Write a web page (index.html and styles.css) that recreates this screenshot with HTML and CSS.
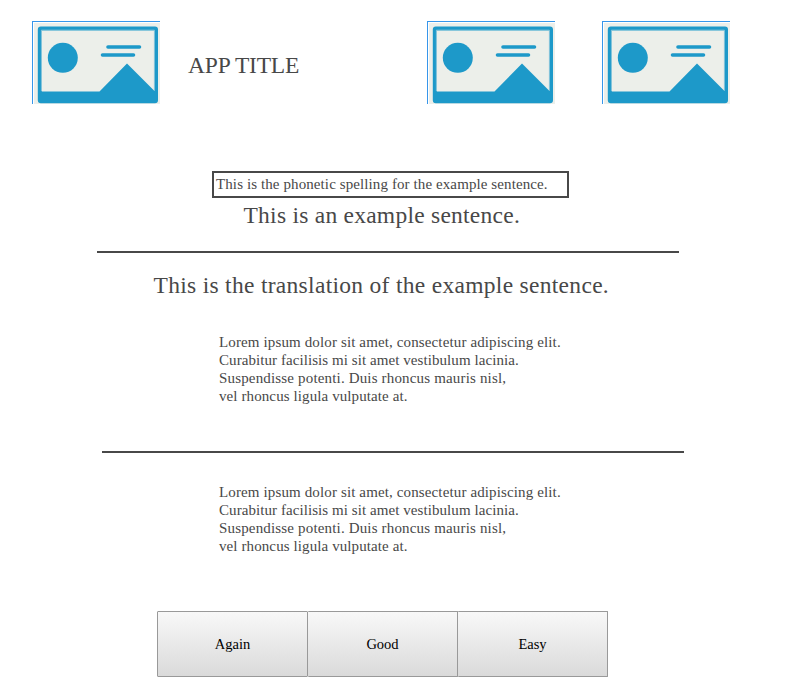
FILE: index.html
```html
<!DOCTYPE html>
<html lang="en">
<head>
<meta charset="utf-8">
<title>App Title</title>
<link rel="stylesheet" href="styles.css">
</head>
<body>
<svg class="defs" aria-hidden="true">
  <symbol id="picture" viewBox="0 0 128 83">
    <path d="M2 2H128V83H2Z" fill="#ecefea"/>
    <path d="M0 0H128V1H1V83H0Z" fill="#3796ea"/>
    <g class="soft">
      <rect x="7.8" y="7.6" width="116.2" height="72.6" rx="1" fill="none" stroke="#1d99c9" stroke-width="4"/>
      <path d="M9.4 70V9.2H122.4V70" fill="none" stroke="#8cc8dc" stroke-width="1"/>
      <path d="M7 70.5H67.5L95 42.5L122.5 70H125V81H7Z" fill="#1d99c9"/>
      <circle cx="30.8" cy="36.8" r="15" fill="#1d99c9"/>
      <path d="M76 26H107.5M70.5 34H101.5" stroke="#1d99c9" stroke-width="3.6" stroke-linecap="round"/>
    </g>
  </symbol>
</svg>
<header class="header">
  <svg class="picture"><use href="#picture"/></svg>
  <h1 class="title">APP TITLE</h1>
  <svg class="picture"><use href="#picture"/></svg>
  <svg class="picture picture-last"><use href="#picture"/></svg>
</header>
<main>
  <div class="phonetic">This is the phonetic spelling for the example sentence.</div>
  <p class="sentence">This is an example sentence.</p>
  <hr class="rule">
  <p class="translation">This is the translation of the example sentence.</p>
  <p class="notes">
    <span class="l1">Lorem ipsum dolor sit amet, consectetur adipiscing elit.</span>
    <span class="l2">Curabitur facilisis mi sit amet vestibulum lacinia.</span>
    <span class="l3">Suspendisse potenti. Duis rhoncus mauris nisl,</span>
    <span class="l4">vel rhoncus ligula vulputate at.</span>
  </p>
  <hr class="rule rule-second">
  <p class="notes notes-second">
    <span class="l1">Lorem ipsum dolor sit amet, consectetur adipiscing elit.</span>
    <span class="l2">Curabitur facilisis mi sit amet vestibulum lacinia.</span>
    <span class="l3">Suspendisse potenti. Duis rhoncus mauris nisl,</span>
    <span class="l4">vel rhoncus ligula vulputate at.</span>
  </p>
  <div class="answers">
    <button class="again">Again</button><button class="good">Good</button><button class="easy">Easy</button>
  </div>
</main>
</body>
</html>
```
FILE: styles.css
```css
* { box-sizing: border-box; }
body {
  margin: 0;
  width: 790px;
  height: 700px;
  overflow: hidden;
  background: #fff;
  color: #484848;
  font-family: Georgia, "Liberation Serif", serif;
  font-size: 15px;
}
h1, p { margin: 0; font-weight: normal; white-space: nowrap; }
.defs { position: absolute; width: 0; height: 0; }
.soft { filter: blur(0.4px); }
.header { display: flex; height: 171px; padding: 21px 0 0 32px; }
.picture { width: 128px; height: 83px; flex: none; }
.picture-last { margin-left: 47px; }
.title {
  width: 267px;
  padding: 31px 0 0 28px;
  font-size: 23.5px;
  line-height: 27px;
  letter-spacing: -0.2px;
}
.phonetic {
  width: 357px;
  height: 27px;
  margin-left: 212px;
  padding-left: 2px;
  border: 2px solid #484848;
  line-height: 23px;
  letter-spacing: 0.1px;
  white-space: nowrap;
}
.sentence { height: 53px; padding: 3px 0 0 243.5px; font-size: 23.5px; line-height: 28px; letter-spacing: 0.25px; }
.rule { width: 582px; height: 2px; margin: 0 0 0 97px; border: 0; background: #484848; }
.translation { height: 80px; padding: 18px 0 0 153.5px; font-size: 23.5px; line-height: 28px; letter-spacing: 0.3px; }
.notes { display: flex; flex-direction: column; align-items: flex-start; height: 118px; padding-left: 219px; line-height: 18px; }
.l1 { letter-spacing: 0.13px; }
.l2 { letter-spacing: 0.07px; }
.l3 { letter-spacing: 0.165px; }
.l4 { letter-spacing: 0.1px; }
.rule-second { margin-left: 102px; }
.notes-second { height: 128px; margin-top: 30px; }
.answers {
  display: grid;
  grid-template-columns: 151px 150px 150px;
  width: 451px;
  height: 66px;
  margin-left: 157px;
}
button {
  padding: 0;
  border: 1px solid #999;
  border-left: 0;
  border-radius: 1px;
  background: linear-gradient(#f8f8f8, #dadada);
  color: #000;
  font: 14.5px Georgia, "Liberation Serif", serif;
}
.again { border-left: 1px solid #999; }
```
